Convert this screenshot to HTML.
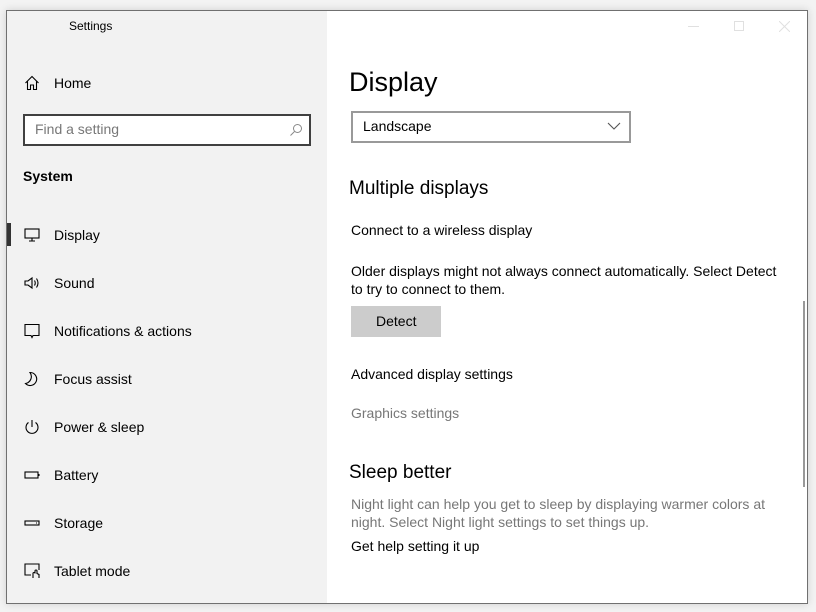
<!DOCTYPE html>
<html><head><meta charset="utf-8"><style>
*{margin:0;padding:0;box-sizing:border-box}
body{width:816px;height:612px;background:#f3f3f3;font-family:"Liberation Sans",sans-serif;position:relative;overflow:hidden;color:#000}
.win{position:absolute;left:6px;top:10px;width:802px;height:594px;border:1px solid #707070;background:#fff;box-shadow:0 0 8px rgba(0,0,0,.15)}
.side{position:absolute;left:0;top:0;width:320px;height:592px;background:#f2f2f2}
.t{position:absolute;white-space:nowrap;font-size:14px}
.ic{position:absolute;left:17px}
</style></head><body>
<div class="win">
<div class="side">
<div class="t" style="left:62px;top:8px;font-size:12px">Settings</div>
<svg class="ic" style="top:64px" width="16" height="16" viewBox="0 0 16 16" fill="none" stroke="#000" stroke-width="1.1"><path d="M1.5 8L8 1.5 14.5 8M3.5 6.5V14.5H6.5V10H9.5V14.5H12.5V6.5"/></svg>
<div class="t" style="left:47px;top:64px">Home</div>
<div style="position:absolute;left:16px;top:103px;width:288px;height:32px;border:2px solid #404040;background:#fff"></div>
<div class="t" style="left:28px;top:110px;color:#777">Find a setting</div>
<svg style="position:absolute;left:282px;top:112px" width="14" height="14" viewBox="0 0 14 14" fill="none" stroke="#888" stroke-width="1"><circle cx="8.5" cy="5.5" r="4"/><path d="M5.5 8.5L1.5 12.5"/></svg>
<div class="t" style="left:16px;top:157px;font-weight:bold">System</div>
<div style="position:absolute;left:0;top:212px;width:4px;height:23px;background:#333"></div>
<svg class="ic" style="top:216px" width="16" height="16" viewBox="0 0 16 16" fill="none" stroke="#000" stroke-width="1.1"><rect x="1" y="2" width="14" height="9"/><path d="M8 11v3M5 14h6"/></svg>
<div class="t" style="left:47px;top:216px">Display</div>
<svg class="ic" style="top:264px" width="18" height="16" viewBox="0 0 18 16" fill="none" stroke="#000" stroke-width="1.1"><path d="M1 6h3l4-3v10l-4-3H1z"/><path d="M10.5 5.5q1.5 2.5 0 5M12.5 3.5q3 4.5 0 9"/></svg>
<div class="t" style="left:47px;top:264px">Sound</div>
<svg class="ic" style="top:312px" width="16" height="16" viewBox="0 0 16 16" fill="none" stroke="#000" stroke-width="1.1"><path d="M1 1.5h14v11H9l-1 2-1-2H1z"/></svg>
<div class="t" style="left:47px;top:312px">Notifications &amp; actions</div>
<svg class="ic" style="top:360px" width="16" height="16" viewBox="0 0 16 16" fill="none" stroke="#000" stroke-width="1.1"><path d="M6 1.5a7 7 0 0 1-4.5 11A6.5 6.5 0 1 0 6 1.5z"/></svg>
<div class="t" style="left:47px;top:360px">Focus assist</div>
<svg class="ic" style="top:408px" width="16" height="16" viewBox="0 0 16 16" fill="none" stroke="#000" stroke-width="1.1"><path d="M8 1v7M4.5 3.5a6 6 0 1 0 7 0"/></svg>
<div class="t" style="left:47px;top:408px">Power &amp; sleep</div>
<svg class="ic" style="top:456px" width="16" height="16" viewBox="0 0 16 16" fill="none" stroke="#000" stroke-width="1.1"><rect x="1" y="5" width="13" height="6"/><path d="M15 7v2"/></svg>
<div class="t" style="left:47px;top:456px">Battery</div>
<svg class="ic" style="top:504px" width="16" height="16" viewBox="0 0 16 16" fill="none" stroke="#000" stroke-width="1.1"><rect x="1" y="6" width="14" height="4"/><path d="M12 8h1"/></svg>
<div class="t" style="left:47px;top:504px">Storage</div>
<svg class="ic" style="top:552px" width="16" height="16" viewBox="0 0 16 16" fill="none" stroke="#000" stroke-width="1.1"><path d="M7 12H1V1h14v6"/><path d="M9 15v-4.5a1 1 0 0 1 2 0V8a1 1 0 0 1 2 0v2.5l2 1V15"/></svg>
<div class="t" style="left:47px;top:552px">Tablet mode</div>
</div>
<div style="position:absolute;left:681px;top:15px;width:11px;height:1px;background:#e0e0e0"></div>
<div style="position:absolute;left:727px;top:10px;width:10px;height:10px;border:1px solid #e0e0e0"></div>
<svg style="position:absolute;left:772px;top:10px" width="11" height="11" viewBox="0 0 11 11" stroke="#e0e0e0" stroke-width="1"><path d="M0 0L11 11M11 0L0 11"/></svg>
<div class="t" style="left:342px;top:56px;font-size:27px">Display</div>
<div style="position:absolute;left:344px;top:100px;width:280px;height:32px;border:2px solid #999"></div>
<div class="t" style="left:356px;top:107px">Landscape</div>
<svg style="position:absolute;left:600px;top:110px" width="14" height="10" viewBox="0 0 14 10" fill="none" stroke="#555" stroke-width="1.1"><path d="M1 2l6 6 6-6"/></svg>
<div class="t" style="left:342px;top:167px;font-size:19px">Multiple displays</div>
<div class="t" style="left:344px;top:211px">Connect to a wireless display</div>
<div class="t" style="left:344px;top:251px;line-height:18px">Older displays might not always connect automatically. Select Detect<br>to try to connect to them.</div>
<div style="position:absolute;left:344px;top:295px;width:90px;height:31px;background:#ccc"></div>
<div class="t" style="left:369px;top:302px">Detect</div>
<div class="t" style="left:344px;top:355px">Advanced display settings</div>
<div class="t" style="left:344px;top:394px;color:#777">Graphics settings</div>
<div class="t" style="left:342px;top:451px;font-size:19px">Sleep better</div>
<div class="t" style="left:344px;top:484px;line-height:18px;color:#777">Night light can help you get to sleep by displaying warmer colors at<br>night. Select Night light settings to set things up.</div>
<div class="t" style="left:344px;top:527px">Get help setting it up</div>
<div style="position:absolute;left:796px;top:290px;width:2px;height:186px;background:#999"></div>
</div>
</body></html>
